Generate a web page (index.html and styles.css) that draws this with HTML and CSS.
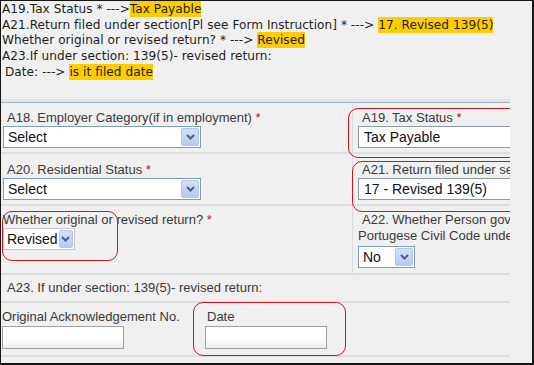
FILE: index.html
```html
<!DOCTYPE html>
<html lang="en">
<head>
    <meta charset="UTF-8">
    <title>Return details</title>
    <link rel="stylesheet" href="styles.css">
</head>
<body>
    <div class="frame">
        <div class="notes">
            <p>A19.Tax Status * ---&gt;<mark>Tax Payable</mark></p>
            <p>A21.Return filed under section[Pl see Form Instruction] * ---&gt; <mark>17. Revised 139(5)</mark></p>
            <p>Whether original or revised return? * ---&gt; <mark>Revised</mark></p>
            <p>A23.If under section: 139(5)- revised return:</p>
            <p class="indent">Date: ---&gt; <mark>is it filed date</mark></p>
        </div>

        <div class="form">
            <div class="row r1">
                <div class="cell">
                    <div class="lbl pad">A18. Employer Category(if in employment) <span class="req">*</span></div>
                    <div class="select wide"><span>Select</span><i class="arrow"><svg width="9" height="6" viewBox="0 0 9 6"><path d="M1 1l3.5 3.5L8 1" fill="none" stroke="#4b5f86" stroke-width="2"/></svg></i></div>
                </div>
                <div class="cell side">
                    <div class="lbl pad">A19. Tax Status <span class="req">*</span></div>
                    <div class="field">Tax Payable</div>
                </div>
            </div>

            <div class="row r2">
                <div class="cell">
                    <div class="lbl pad">A20. Residential Status <span class="req">*</span></div>
                    <div class="select wide"><span>Select</span><i class="arrow"><svg width="9" height="6" viewBox="0 0 9 6"><path d="M1 1l3.5 3.5L8 1" fill="none" stroke="#4b5f86" stroke-width="2"/></svg></i></div>
                </div>
                <div class="cell side">
                    <div class="lbl pad">A21. Return filed under se</div>
                    <div class="field">17 - Revised 139(5)</div>
                </div>
            </div>

            <div class="row r3">
                <div class="cell">
                    <div class="lbl">Whether original or revised return? <span class="req">*</span></div>
                    <div class="select short"><span>Revised</span><i class="arrow"><svg width="9" height="6" viewBox="0 0 9 6"><path d="M1 1l3.5 3.5L8 1" fill="none" stroke="#4b5f86" stroke-width="2"/></svg></i></div>
                </div>
                <div class="cell side">
                    <div class="lbl pad">A22. Whether Person gov</div>
                    <div class="lbl">Portugese Civil Code unde</div>
                    <div class="select tiny"><span>No</span><i class="arrow"><svg width="9" height="6" viewBox="0 0 9 6"><path d="M1 1l3.5 3.5L8 1" fill="none" stroke="#4b5f86" stroke-width="2"/></svg></i></div>
                </div>
            </div>

            <div class="row r4">
                <div class="lbl pad">A23. If under section: 139(5)- revised return:</div>
            </div>

            <div class="row r5">
                <div class="cell ack">
                    <div class="lbl">Original Acknowledgement No.</div>
                    <div class="box"></div>
                </div>
                <div class="cell date">
                    <div class="lbl">Date</div>
                    <div class="box"></div>
                </div>
            </div>

            <!-- red annotation outlines -->
            <div class="note-ring ring-a19"></div>
            <div class="note-ring ring-a21"></div>
            <div class="note-ring ring-rev"></div>
            <div class="note-ring ring-date"></div>
        </div>
    </div>
</body>
</html>
```

FILE: styles.css
```css
body {
    margin: 0;
}
.frame {
    width: 534px;
    height: 365px;
    box-sizing: border-box;
    border: 1px solid #151515;
    border-right-width: 2px;
    border-bottom-width: 2px;
    background: #f0f0f0;
    overflow: hidden;
}
.notes {
    height: 98px;
    box-sizing: border-box;
    padding: 1px 0 0 1px;
    font-family: "DejaVu Sans", sans-serif;
    font-size: 12.1px;
    line-height: 15.7px;
    letter-spacing: 0.05px;
    color: #1e1e1e;
}
.notes p {
    margin: 0;
    white-space: nowrap;
}
.notes .indent {
    padding-left: 3px;
}
mark {
    background: #ffcc00;
    color: #1e1e1e;
    padding: 1px 0;
}
.form {
    position: relative;
    width: 509px;
    border-top: 3px solid #d6e6f3;
    box-shadow: inset 0 1px 0 #a9b3bd;
    font-family: "Liberation Sans", Arial, sans-serif;
    font-size: 13px;
    color: #3a3a3a;
    overflow: hidden;
}
.row {
    display: grid;
    grid-template-columns: 351px 1fr;
    border-bottom: 2px solid #dedede;
}
.cell {
    padding-left: 2px;
}
.side {
    border-left: 1px solid #dcdcdc;
    padding-left: 5px;
    overflow: hidden;
}
.lbl {
    line-height: 16px;
    white-space: nowrap;
}
.lbl.pad {
    padding-left: 4px;
}
.req {
    color: #b5121b;
}
.r1 .cell {
    padding-top: 7px;
    padding-bottom: 4px;
}
.r1 {
    margin-top: 1px;
}
.r2 .cell {
    padding-top: 8px;
    padding-bottom: 4px;
}
.r3 .cell {
    padding-top: 6px;
    padding-bottom: 5px;
}
.r3 .side .select {
    margin-top: 2px;
}
.r4 {
    display: block;
    padding: 5px 0 5px 2px;
}
.r5 {
    display: flex;
    padding: 6px 0 6px 1px;
}
.r5 .cell {
    padding-left: 0;
}
.r5 .ack {
    width: 203px;
}
.r5 .date .lbl {
    padding-left: 2px;
}
.r5 .box {
    margin-top: 1px;
}
.select {
    display: flex;
    height: 22px;
    box-sizing: border-box;
    border: 1px solid #7f9db9;
    background: #fff;
    font-size: 14px;
    color: #111;
}
.select span {
    flex: 1;
    line-height: 20px;
    padding-left: 4px;
}
.select .arrow {
    width: 16px;
    margin: 1px;
    border: 1px solid #b7c7e8;
    border-radius: 2px;
    background: linear-gradient(#d3e0fb, #b6c9f1);
    display: flex;
    align-items: center;
    justify-content: center;
}
.select.wide {
    width: 198px;
}
.select.short {
    width: 72px;
    border-color: #c8c8c8;
}
.select.short span {
    padding-left: 3px;
}
.select.tiny {
    width: 57px;
}
.field {
    height: 22px;
    width: 200px;
    box-sizing: border-box;
    border: 1px solid #8d99a7;
    background: #fff;
    font-size: 14px;
    line-height: 20px;
    padding-left: 5px;
    color: #111;
}
.box {
    width: 122px;
    height: 23px;
    box-sizing: border-box;
    border: 1px solid #a2a2a2;
    background: linear-gradient(#fff 55%, #ececec);
}
.note-ring {
    position: absolute;
    border: 1px solid #d2141c;
    border-radius: 10px;
}
.ring-a19 {
    left: 347px;
    top: 6px;
    width: 180px;
    height: 48px;
}
.ring-a21 {
    left: 351px;
    top: 59px;
    width: 180px;
    height: 49px;
}
.ring-rev {
    left: 1px;
    top: 109px;
    width: 114px;
    height: 48px;
}
.ring-date {
    left: 192px;
    top: 200px;
    width: 151px;
    height: 52px;
}
```
